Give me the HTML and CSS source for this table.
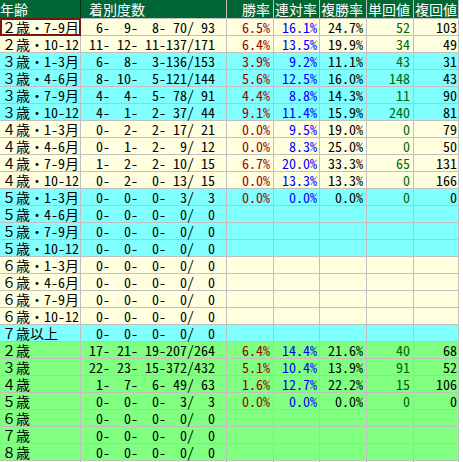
FILE: index.html
```html
<!DOCTYPE html>
<html lang="ja">
<head>
<meta charset="utf-8">
<title>年齢別成績</title>
<link rel="stylesheet" href="styles.css">
</head>
<body>
<div class="tbl">
  <div class="r head">
    <div class="c c1">年齢</div><div class="c c2h">着別度数</div><div class="c n wr">勝率</div><div class="c n rr">連対率</div><div class="c n sr">複勝率</div><div class="c n tw">単回値</div><div class="c n fw">複回値</div>
  </div>
  <div class="r cream"><div class="c c1 sel">２歳・7-9月</div><div class="c c2"> 6-  9-  8- 70/ 93</div><div class="c n wr">6.5%</div><div class="c n rr">16.1%</div><div class="c n sr">24.7%</div><div class="c n tw">52</div><div class="c n fw">103</div></div>
  <div class="r cream"><div class="c c1">２歳・10-12</div><div class="c c2">11- 12- 11-137/171</div><div class="c n wr">6.4%</div><div class="c n rr">13.5%</div><div class="c n sr">19.9%</div><div class="c n tw">34</div><div class="c n fw">49</div></div>
  <div class="r cyan"><div class="c c1">３歳・1-3月</div><div class="c c2"> 6-  8-  3-136/153</div><div class="c n wr">3.9%</div><div class="c n rr">9.2%</div><div class="c n sr">11.1%</div><div class="c n tw">43</div><div class="c n fw">31</div></div>
  <div class="r cyan"><div class="c c1">３歳・4-6月</div><div class="c c2"> 8- 10-  5-121/144</div><div class="c n wr">5.6%</div><div class="c n rr">12.5%</div><div class="c n sr">16.0%</div><div class="c n tw">148</div><div class="c n fw">43</div></div>
  <div class="r cyan"><div class="c c1">３歳・7-9月</div><div class="c c2"> 4-  4-  5- 78/ 91</div><div class="c n wr">4.4%</div><div class="c n rr">8.8%</div><div class="c n sr">14.3%</div><div class="c n tw">11</div><div class="c n fw">90</div></div>
  <div class="r cyan"><div class="c c1">３歳・10-12</div><div class="c c2"> 4-  1-  2- 37/ 44</div><div class="c n wr">9.1%</div><div class="c n rr">11.4%</div><div class="c n sr">15.9%</div><div class="c n tw">240</div><div class="c n fw">81</div></div>
  <div class="r cream"><div class="c c1">４歳・1-3月</div><div class="c c2"> 0-  2-  2- 17/ 21</div><div class="c n wr">0.0%</div><div class="c n rr">9.5%</div><div class="c n sr">19.0%</div><div class="c n tw">0</div><div class="c n fw">79</div></div>
  <div class="r cream"><div class="c c1">４歳・4-6月</div><div class="c c2"> 0-  1-  2-  9/ 12</div><div class="c n wr">0.0%</div><div class="c n rr">8.3%</div><div class="c n sr">25.0%</div><div class="c n tw">0</div><div class="c n fw">50</div></div>
  <div class="r cream"><div class="c c1">４歳・7-9月</div><div class="c c2"> 1-  2-  2- 10/ 15</div><div class="c n wr">6.7%</div><div class="c n rr">20.0%</div><div class="c n sr">33.3%</div><div class="c n tw">65</div><div class="c n fw">131</div></div>
  <div class="r cream"><div class="c c1">４歳・10-12</div><div class="c c2"> 0-  2-  0- 13/ 15</div><div class="c n wr">0.0%</div><div class="c n rr">13.3%</div><div class="c n sr">13.3%</div><div class="c n tw">0</div><div class="c n fw">166</div></div>
  <div class="r cyan"><div class="c c1">５歳・1-3月</div><div class="c c2"> 0-  0-  0-  3/  3</div><div class="c n wr">0.0%</div><div class="c n rr">0.0%</div><div class="c n sr">0.0%</div><div class="c n tw">0</div><div class="c n fw">0</div></div>
  <div class="r cyan"><div class="c c1">５歳・4-6月</div><div class="c c2"> 0-  0-  0-  0/  0</div><div class="c n wr"></div><div class="c n rr"></div><div class="c n sr"></div><div class="c n tw"></div><div class="c n fw"></div></div>
  <div class="r cyan"><div class="c c1">５歳・7-9月</div><div class="c c2"> 0-  0-  0-  0/  0</div><div class="c n wr"></div><div class="c n rr"></div><div class="c n sr"></div><div class="c n tw"></div><div class="c n fw"></div></div>
  <div class="r cyan"><div class="c c1">５歳・10-12</div><div class="c c2"> 0-  0-  0-  0/  0</div><div class="c n wr"></div><div class="c n rr"></div><div class="c n sr"></div><div class="c n tw"></div><div class="c n fw"></div></div>
  <div class="r cream"><div class="c c1">６歳・1-3月</div><div class="c c2"> 0-  0-  0-  0/  0</div><div class="c n wr"></div><div class="c n rr"></div><div class="c n sr"></div><div class="c n tw"></div><div class="c n fw"></div></div>
  <div class="r cream"><div class="c c1">６歳・4-6月</div><div class="c c2"> 0-  0-  0-  0/  0</div><div class="c n wr"></div><div class="c n rr"></div><div class="c n sr"></div><div class="c n tw"></div><div class="c n fw"></div></div>
  <div class="r cream"><div class="c c1">６歳・7-9月</div><div class="c c2"> 0-  0-  0-  0/  0</div><div class="c n wr"></div><div class="c n rr"></div><div class="c n sr"></div><div class="c n tw"></div><div class="c n fw"></div></div>
  <div class="r cream"><div class="c c1">６歳・10-12</div><div class="c c2"> 0-  0-  0-  0/  0</div><div class="c n wr"></div><div class="c n rr"></div><div class="c n sr"></div><div class="c n tw"></div><div class="c n fw"></div></div>
  <div class="r cyan"><div class="c c1">７歳以上</div><div class="c c2"> 0-  0-  0-  0/  0</div><div class="c n wr"></div><div class="c n rr"></div><div class="c n sr"></div><div class="c n tw"></div><div class="c n fw"></div></div>
  <div class="r green"><div class="c c1">２歳</div><div class="c c2">17- 21- 19-207/264</div><div class="c n wr">6.4%</div><div class="c n rr">14.4%</div><div class="c n sr">21.6%</div><div class="c n tw">40</div><div class="c n fw">68</div></div>
  <div class="r green"><div class="c c1">３歳</div><div class="c c2">22- 23- 15-372/432</div><div class="c n wr">5.1%</div><div class="c n rr">10.4%</div><div class="c n sr">13.9%</div><div class="c n tw">91</div><div class="c n fw">52</div></div>
  <div class="r green"><div class="c c1">４歳</div><div class="c c2"> 1-  7-  6- 49/ 63</div><div class="c n wr">1.6%</div><div class="c n rr">12.7%</div><div class="c n sr">22.2%</div><div class="c n tw">15</div><div class="c n fw">106</div></div>
  <div class="r green"><div class="c c1">５歳</div><div class="c c2"> 0-  0-  0-  3/  3</div><div class="c n wr">0.0%</div><div class="c n rr">0.0%</div><div class="c n sr">0.0%</div><div class="c n tw">0</div><div class="c n fw">0</div></div>
  <div class="r green"><div class="c c1">６歳</div><div class="c c2"> 0-  0-  0-  0/  0</div><div class="c n wr"></div><div class="c n rr"></div><div class="c n sr"></div><div class="c n tw"></div><div class="c n fw"></div></div>
  <div class="r green"><div class="c c1">７歳</div><div class="c c2"> 0-  0-  0-  0/  0</div><div class="c n wr"></div><div class="c n rr"></div><div class="c n sr"></div><div class="c n tw"></div><div class="c n fw"></div></div>
  <div class="r green"><div class="c c1">８歳</div><div class="c c2"> 0-  0-  0-  0/  0</div><div class="c n wr"></div><div class="c n rr"></div><div class="c n sr"></div><div class="c n tw"></div><div class="c n fw"></div></div>
  <div class="r cream"><div class="c c1"></div><div class="c c2"></div><div class="c n wr"></div><div class="c n rr"></div><div class="c n sr"></div><div class="c n tw"></div><div class="c n fw"></div></div>
</div>
</body>
</html>
```

FILE: styles.css
```css
html, body {
  margin: 0;
  padding: 0;
  background: #ffffff;
}

body {
  font-family: "Noto Sans Mono CJK JP", "Noto Sans CJK JP", monospace;
  font-size: 14px;
  color: #000000;
}

.tbl {
  width: 459px;
}

.r {
  display: grid;
  grid-template-columns: 81px 146px 47px 46px 47px 47px 45px;
  height: 17px;
}

.r.head {
  height: 19px;
  background: #006633;
  color: #ffffff;
}

.cream { background: #ffffe0; }
.cyan { background: #80ffff; }
.green { background: #80ff80; }

.c {
  box-sizing: border-box;
  border-right: 1px solid #c0c0c0;
  border-bottom: 1px solid #c0c0c0;
  line-height: 16px;
  white-space: pre;
}

.head .c {
  line-height: 18px;
}

.head .c1 {
  border-right-color: #003319;
  padding-left: 0;
}

.c1 {
  padding-left: 2px;
}

.c2h {
  padding-left: 8px;
}

.c2 {
  text-align: right;
  padding-right: 11px;
}

.n {
  text-align: right;
}

.wr { padding-right: 3px; }
.rr { padding-right: 2px; }
.sr { padding-right: 3px; }
.tw { padding-right: 3px; }
.fw { padding-right: 1px; }

.cream .wr, .cyan .wr, .green .wr { color: #990000; }
.cream .rr, .cyan .rr, .green .rr { color: #0000ff; }
.cream .tw, .cyan .tw, .green .tw { color: #006600; }

.sel {
  position: relative;
}

.sel::after {
  content: "";
  position: absolute;
  left: 0;
  top: -1px;
  right: -1px;
  bottom: -1px;
  border: 2px solid #7a1515;
}
```
